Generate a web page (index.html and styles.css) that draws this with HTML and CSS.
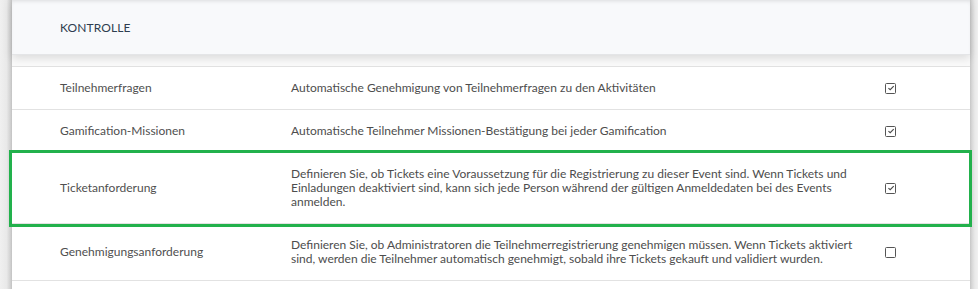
FILE: index.html
```html
<!DOCTYPE html>
<html lang="de">
<head>
<meta charset="utf-8">
<title>Kontrolle</title>
<link rel="stylesheet" href="styles.css">
</head>
<body>
<div class="page">
  <div class="gutter-left"></div>
  <main class="panel">
    <header class="panel-head">KONTROLLE</header>
    <div class="spacer"></div>
    <div class="rows">
      <div class="row">
        <div class="label">Teilnehmerfragen</div>
        <div class="desc">Automatische Genehmigung von Teilnehmerfragen zu den Aktivitäten</div>
        <div class="check"><span class="box checked"><svg viewBox="0 0 10 10" width="8" height="8"><path d="M1.8 5.2 L4 7.2 L8.4 2.6" fill="none" stroke="#4a4a4a" stroke-width="1.4"/></svg></span></div>
      </div>
      <div class="row">
        <div class="label">Gamification-Missionen</div>
        <div class="desc">Automatische Teilnehmer Missionen-Bestätigung bei jeder Gamification</div>
        <div class="check"><span class="box checked"><svg viewBox="0 0 10 10" width="8" height="8"><path d="M1.8 5.2 L4 7.2 L8.4 2.6" fill="none" stroke="#4a4a4a" stroke-width="1.4"/></svg></span></div>
      </div>
      <div class="row highlight">
        <div class="label">Ticketanforderung</div>
        <div class="desc">Definieren Sie, ob Tickets eine Voraussetzung für die Registrierung zu dieser Event sind. Wenn Tickets und Einladungen deaktiviert sind, kann sich jede Person während der gültigen Anmeldedaten bei des Events anmelden.</div>
        <div class="check"><span class="box checked"><svg viewBox="0 0 10 10" width="8" height="8"><path d="M1.8 5.2 L4 7.2 L8.4 2.6" fill="none" stroke="#4a4a4a" stroke-width="1.4"/></svg></span></div>
      </div>
      <div class="row">
        <div class="label">Genehmigungsanforderung</div>
        <div class="desc">Definieren Sie, ob Administratoren die Teilnehmerregistrierung genehmigen müssen. Wenn Tickets aktiviert sind, werden die Teilnehmer automatisch genehmigt, sobald ihre Tickets gekauft und validiert wurden.</div>
        <div class="check"><span class="box"></span></div>
      </div>
    </div>
  </main>
  <div class="gutter-right"></div>
</div>
</body>
</html>
```

FILE: styles.css
```css
html, body {
  margin: 0;
  padding: 0;
  background: #ffffff;
}

body {
  font-family: Lato, "Open Sans", "Liberation Sans", sans-serif;
  font-size: 12px;
  color: #4d4d4d;
}

.page {
  display: flex;
  width: 978px;
  height: 289px;
  overflow: hidden;
}

.gutter-left {
  flex: 0 0 12px;
  background: linear-gradient(to right, #f0f0f0 0%, #e9e9e9 55%, #d2d2d2 85%, #c2c2c2 100%);
}

.gutter-right {
  flex: 0 0 8px;
  background: linear-gradient(to right, #c6c6c6 0%, #d8d8d8 25%, #e9e9e9 60%, #f1f1f1 100%);
}

.panel {
  flex: 0 0 958px;
  background: #ffffff;
  display: flex;
  flex-direction: column;
}

.panel-head {
  height: 54px;
  display: flex;
  align-items: center;
  padding-left: 48px;
  background: #f8f9fb;
  border-bottom: 1px solid #e4e5e7;
  box-shadow: 0 3px 9px rgba(0, 0, 0, 0.13), inset 0 3px 4px -2px rgba(0, 0, 0, 0.12);
  color: #2e3d4f;
  font-size: 12px;
  letter-spacing: 0.1px;
  position: relative;
  z-index: 1;
}

.spacer {
  height: 11px;
  background: #fafafa;
}

.rows {
  border-top: 1px solid #e2e2e2;
}

.row {
  display: grid;
  grid-template-columns: 231px 570px 1fr;
  align-items: center;
  padding: 14px 0 14px 48px;
  line-height: 14px;
  border-bottom: 1px solid #e2e2e2;
}

.row.highlight {
  position: relative;
}

.row.highlight::after {
  content: "";
  position: absolute;
  top: -3px;
  bottom: -4px;
  left: -3px;
  right: -2px;
  border: 3px solid #22b14c;
  pointer-events: none;
}

.label {
  color: #4f4f4f;
}

.desc {
  color: #4d4d4d;
}

.check {
  padding-left: 24px;
  display: flex;
  align-items: center;
}

.box {
  box-sizing: border-box;
  width: 11px;
  height: 11px;
  border: 1.5px solid #555555;
  border-radius: 1.5px;
  display: flex;
  align-items: center;
  justify-content: center;
  background: #ffffff;
}

.box svg {
  display: block;
}
```
